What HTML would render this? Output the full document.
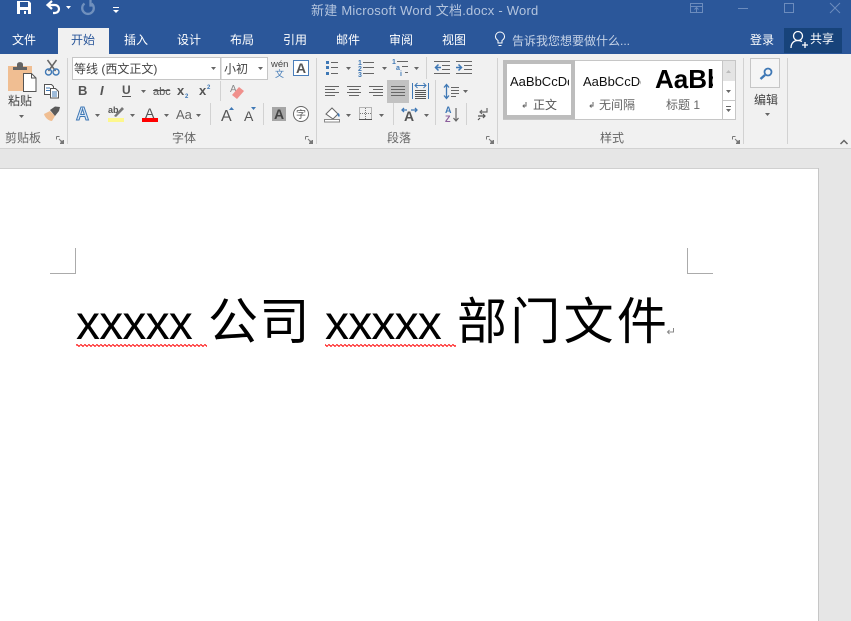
<!DOCTYPE html>
<html lang="zh">
<head>
<meta charset="utf-8">
<title>新建 Microsoft Word 文档.docx - Word</title>
<style>
html,body{margin:0;padding:0;width:851px;height:621px;overflow:hidden;background:#e6e6e6}
svg{display:block;position:absolute;left:0;top:0}
text{font-family:"Liberation Sans","Noto Sans CJK SC",sans-serif}
.t{font-size:12px;fill:#fff}
.g{font-size:12px;fill:#444}
.l{font-size:12px;fill:#666}
</style>
</head>
<body>
<svg width="851" height="621" viewBox="0 0 851 621" xmlns="http://www.w3.org/2000/svg">
<defs>
<polygon id="a" points="0,0 5,0 2.5,3" fill="#666"/>
<g id="lc" fill="none" stroke="#777" stroke-width="1"><path d="M.5 .5h3M.5 .5v3M7.5 4v3.5H4"/><path d="M3 3l3 3" stroke="#777"/><rect x="4.5" y="4.5" width="3" height="3" fill="#777" stroke="none"/></g>
<pattern id="wv" x="0" y="344" width="4" height="3" patternUnits="userSpaceOnUse">
<path d="M-1 1.8L1 .6L3 2.4L5 .6" fill="none" stroke="#f00" stroke-width="1"/>
</pattern>
</defs>

<!-- backgrounds -->
<rect width="851" height="54" fill="#2b579a"/>
<rect y="54" width="851" height="94" fill="#f1f1f1"/>
<rect y="148" width="851" height="1" fill="#d2d2d2"/>
<rect y="149" width="851" height="472" fill="#e6e6e6"/>
<rect x="0" y="168" width="818" height="453" fill="#fff"/>
<rect x="818" y="168" width="1" height="453" fill="#c6c6c6"/>
<rect x="0" y="168" width="818" height="1" fill="#d0d0d0"/>

<!-- QAT -->
<path d="M17 1h12l2 2v11H17z" fill="#fff"/>
<rect x="20" y="2" width="8" height="5" fill="#2b579a"/>
<rect x="20" y="10" width="8" height="4" fill="#2b579a"/>
<rect x="24" y="11" width="2" height="3" fill="#fff"/>
<path d="M48 5h7a4 4 0 0 1 0 8h-2" fill="none" stroke="#fff" stroke-width="2.200"/>
<path d="M52 1l-4.500 4 4.500 4" fill="none" stroke="#fff" stroke-width="2.200"/>
<polygon points="66,6 71,6 68.500,9" fill="#fff"/>
<path d="M84.500 3.500a5.800 5.800 0 1 0 7 0" fill="none" stroke="#7090bd" stroke-width="2.300"/>
<path d="M90.500 0v5.500h3" fill="none" stroke="#7090bd" stroke-width="2.300"/>
<rect x="113" y="7" width="6" height="1" fill="#fff"/>
<polygon points="113,10 119,10 116,13" fill="#fff"/>

<!-- title -->
<text x="311" y="15" style="font-size:13px;fill:#b3c4de;letter-spacing:.24px">新建 Microsoft Word 文档.docx - Word</text>

<!-- window controls -->
<g fill="none" stroke="#6c8cbd" stroke-width="1">
<rect x="690.500" y="3.500" width="12" height="9"/>
<path d="M690 6.500h13M696.500 12V8M694.500 9.500l2-2 2 2"/>
<path d="M738 8.500h10"/>
<rect x="784.500" y="3.500" width="9" height="9"/>
<path d="M830 3l10 10M840 3l-10 10"/>
</g>

<!-- tabs -->
<rect x="58" y="28" width="51" height="26" fill="#f1f1f1"/>
<text class="t" x="12" y="44">文件</text>
<text class="g" x="71" y="44" style="fill:#2b579a">开始</text>
<text class="t" x="124" y="44">插入</text>
<text class="t" x="177" y="44">设计</text>
<text class="t" x="230" y="44">布局</text>
<text class="t" x="283" y="44">引用</text>
<text class="t" x="336" y="44">邮件</text>
<text class="t" x="389" y="44">审阅</text>
<text class="t" x="442" y="44">视图</text>
<path d="M498 43v-2.500c-1.500-1-2.500-2.300-2.500-4a4.500 4.500 0 0 1 9 0c0 1.700-1 3-2.500 4V43zM498.500 45.500h3" fill="none" stroke="#fff" stroke-width="1"/>
<text x="512" y="45" style="font-size:12px;fill:#c6d3e7">告诉我您想要做什么...</text>
<text class="t" x="750" y="44">登录</text>
<rect x="784" y="28" width="58" height="25" fill="#17437a"/>
<circle cx="798" cy="36" r="4.500" fill="none" stroke="#fff" stroke-width="1.300"/>
<path d="M791 48c0-5 3-7.500 7-7.500 2 0 3 .5 4 1M802 45h6M805 42v6" fill="none" stroke="#fff" stroke-width="1.300"/>
<text class="t" x="810" y="43">共享</text>

<!-- separators -->
<g fill="#d2d2d2">
<rect x="67" y="58" width="1" height="86"/>
<rect x="316" y="58" width="1" height="86"/>
<rect x="497" y="58" width="1" height="86"/>
<rect x="743" y="58" width="1" height="86"/>
<rect x="787" y="58" width="1" height="86"/>
<rect x="426" y="57" width="1" height="22"/>
<rect x="220" y="81" width="1" height="20"/>
<rect x="210" y="103" width="1" height="22"/>
<rect x="263" y="103" width="1" height="22"/>
<rect x="435" y="80" width="1" height="45"/>
<rect x="393" y="103" width="1" height="22"/>
<rect x="466" y="103" width="1" height="22"/>
</g>

<!-- clipboard -->
<rect x="8" y="66" width="24" height="25" fill="#f0be92"/>
<path d="M13 70v-3h4v-2.500a2.500 2 0 0 1 6 0V67h4v3z" fill="#636363"/>
<path d="M23.500 73.500h8l4.500 4.500v13.500H23.500z" fill="#fff" stroke="#555"/>
<path d="M31.500 73.500v4.500H36" fill="none" stroke="#555"/>
<text class="g" x="8" y="105">粘贴</text>
<use href="#a" x="19" y="115"/>
<!-- scissors -->
<path d="M47.500 60l8 11M56.500 60l-8 11" stroke="#666" stroke-width="1.500" fill="none"/>
<circle cx="48.500" cy="72" r="3" fill="none" stroke="#3f78b5" stroke-width="1.400"/>
<circle cx="56" cy="72" r="3" fill="none" stroke="#3f78b5" stroke-width="1.400"/>
<!-- copy -->
<path d="M44.500 84.500h7l2 2v8h-9z" fill="#fff" stroke="#555"/>
<path d="M50.500 88.500h5l3 3v6.500h-8z" fill="#fff" stroke="#555"/>
<path d="M46 88h4M46 90.500h4M52 92h5M52 94h5M52 96h5" stroke="#3f78b5" stroke-width="1"/>
<!-- painter -->
<path d="M44 114l6-3 5 5-3 5c-3 0-7-3-8-7z" fill="#f0be92"/>
<path d="M50 110l5-3.500 5 .5-1 4-4 5z" fill="#5a5a5a"/>
<text class="l" x="5" y="142">剪贴板</text>
<use href="#lc" x="56" y="136"/>

<!-- font -->
<rect x="72.500" y="57.500" width="148" height="22" fill="#fff" stroke="#c6c6c6"/>
<rect x="221" y="57.500" width="46.500" height="22" fill="#fff" stroke="#c6c6c6"/>
<text class="g" x="74" y="73" style="font-size:12px">等线 (西文正文)</text>
<use href="#a" x="211" y="67"/>
<text class="g" x="224" y="73">小初</text>
<use href="#a" x="258" y="67"/>
<text x="271" y="67" style="font-size:9.500px;fill:#444">wén</text>
<text x="275" y="77" style="font-size:9px;fill:#3f78b5">文</text>
<rect x="293.500" y="60.500" width="15" height="15" fill="#fff" stroke="#4a7ebb"/>
<text x="296" y="73" style="font-size:14px;font-weight:bold;fill:#555">A</text>

<text x="78" y="95" style="font-size:13px;font-weight:bold;fill:#555">B</text>
<text x="100" y="95" style="font-size:13px;font-weight:bold;font-style:italic;fill:#555">I</text>
<text x="122" y="94" style="font-size:12px;font-weight:bold;fill:#555">U</text>
<rect x="122" y="96" width="9" height="1" fill="#555"/>
<use href="#a" x="141" y="90"/>
<text x="153" y="95" style="font-size:11px;fill:#555">abc</text>
<rect x="153" y="90" width="17" height="1" fill="#555"/>
<text x="177" y="95" style="font-size:13px;font-weight:bold;fill:#555">x</text>
<text x="185" y="98" style="font-size:6px;font-weight:bold;fill:#3f78b5">2</text>
<text x="199" y="95" style="font-size:13px;font-weight:bold;fill:#555">x</text>
<text x="207" y="89" style="font-size:6px;font-weight:bold;fill:#3f78b5">2</text>
<text x="230" y="92" style="font-size:10px;fill:#888">A</text>
<path d="M232 95l7-8 5 4-7 8z" fill="#f0908c"/>

<text x="76" y="120" style="font-size:18px;font-weight:bold;fill:#dbe8f6;stroke:#3f78b5;stroke-width:1">A</text>
<use href="#a" x="95" y="114"/>
<text x="108" y="113" style="font-size:9px;font-weight:bold;fill:#555">ab</text>
<path d="M114 116l8-9 2 2-8 8z" fill="#777"/>
<rect x="108" y="118" width="16" height="4" fill="#fdf78d"/>
<use href="#a" x="130" y="114"/>
<text x="145" y="118" style="font-size:14px;fill:#555">A</text>
<rect x="142" y="118" width="16" height="4" fill="#f00"/>
<use href="#a" x="164" y="114"/>
<text x="176" y="119" style="font-size:13px;fill:#666">Aa</text>
<use href="#a" x="196" y="114"/>
<text x="221" y="121" style="font-size:16px;fill:#555">A</text>
<polygon points="229,110 234,110 231.500,107" fill="#3f78b5"/>
<text x="244" y="121" style="font-size:14px;fill:#555">A</text>
<polygon points="251,107 256,107 253.500,110" fill="#3f78b5"/>
<rect x="272" y="107" width="14" height="14" fill="#a6a6a6"/>
<text x="274" y="119" style="font-size:14px;font-weight:bold;fill:#444">A</text>
<circle cx="301" cy="114" r="7.500" fill="#fff" stroke="#666"/>
<text x="296" y="118" style="font-size:10px;fill:#555">字</text>
<text class="l" x="172" y="142">字体</text>
<use href="#lc" x="305" y="136"/>

<!-- paragraph row 1 -->
<g fill="#3f78b5">
<rect x="326" y="61" width="3" height="3"/><rect x="326" y="66" width="3" height="3"/><rect x="326" y="72" width="3" height="3"/>
</g>
<path d="M331 62.500h7M331 67.500h7M331 73.500h7M363 62.500h11M363 67.500h11M363 73.500h11M397 61.500h11M402 66.500h6M405 72.500h3" stroke="#666" stroke-width="1"/>
<text x="358" y="65" style="font-size:7px;font-weight:bold;fill:#3f78b5">1</text>
<text x="358" y="71" style="font-size:7px;font-weight:bold;fill:#3f78b5">2</text>
<text x="358" y="77" style="font-size:7px;font-weight:bold;fill:#3f78b5">3</text>
<text x="392" y="64" style="font-size:7px;font-weight:bold;fill:#3f78b5">1</text>
<text x="396" y="70" style="font-size:7px;font-weight:bold;fill:#3f78b5">a</text>
<text x="400" y="76" style="font-size:7px;font-weight:bold;fill:#3f78b5">i</text>
<use href="#a" x="346" y="67"/><use href="#a" x="382" y="67"/><use href="#a" x="414" y="67"/>
<path d="M434 61.500h16M442 65.500h8M442 69.500h8M434 73.500h16M456 61.500h16M464 65.500h8M464 69.500h8M456 73.500h16" stroke="#666" stroke-width="1"/>
<path d="M441 67.500h-5M438.500 64.500l-3 3 3 3M456 67.500h5M458.500 64.500l3 3-3 3" stroke="#3f78b5" stroke-width="1.500" fill="none"/>

<!-- paragraph row 2 -->
<rect x="387" y="80" width="22" height="23" fill="#c2c2c2"/>
<path d="M325 86.500h14M325 89.500h10M325 92.500h14M325 95.500h10M347 86.500h14M349 89.500h10M347 92.500h14M349 95.500h10M369 86.500h14M373 89.500h10M369 92.500h14M373 95.500h10M391 86.500h14M391 89.500h14M391 92.500h14M391 95.500h14" stroke="#666" stroke-width="1"/>
<path d="M412.500 83v16M428.500 83v16" stroke="#3f78b5" stroke-width="1"/>
<path d="M415 90.500h11M415 92.500h11M415 94.500h11M415 96.500h11M415 98.500h11" stroke="#555" stroke-width="1"/>
<path d="M415 85.500h11M417.500 83l-2.500 2.500 2.500 2.500M423.500 83l2.500 2.500-2.500 2.500" stroke="#3f78b5" fill="none"/>
<path d="M446.500 85v13M444 87.500l2.500-3 2.500 3M444 95.500l2.500 3 2.500-3" stroke="#3f78b5" stroke-width="1.300" fill="none"/>
<path d="M451 87.500h8M451 90.500h8M451 93.500h8M451 96.500h5" stroke="#666"/>
<use href="#a" x="463" y="90"/>

<!-- paragraph row 3 -->
<path d="M326 114l6-6 6 6-5 5z" fill="#fff" stroke="#666"/>
<path d="M338 113c2 1 2 3 1 4-1-1-2-2-1-4z" fill="#3f78b5"/>
<rect x="324.500" y="119.500" width="15" height="2.500" fill="#fff" stroke="#888"/>
<use href="#a" x="346" y="114"/>
<rect x="359.500" y="107.500" width="12" height="12" fill="none" stroke="#777" stroke-dasharray="1 1"/>
<path d="M365.500 108v12M360 113.500h12" stroke="#777" stroke-dasharray="1 1"/>
<path d="M359 119.500h13" stroke="#555"/>
<use href="#a" x="379" y="114"/>
<text x="404" y="121" style="font-size:14px;font-weight:bold;fill:#555">A</text>
<path d="M402 110h5M404 108l-2 2 2 2M411 110h6M415 108l2 2-2 2" stroke="#3f78b5" stroke-width="1.300" fill="none"/>
<use href="#a" x="424" y="114"/>
<text x="445" y="113" style="font-size:9px;font-weight:bold;fill:#3f78b5">A</text>
<text x="445" y="122" style="font-size:9px;font-weight:bold;fill:#8b5e9b">Z</text>
<path d="M456 108v13M453.500 118l2.500 3 2.500-3" stroke="#666" stroke-width="1.200" fill="none"/>
<path d="M487 108v4h-7M482 110l-2 2 2 2" stroke="#666" stroke-width="1.200" fill="none"/>
<path d="M478 116h7M483 114l2 2-2 2M478 120l2-2" stroke="#555" stroke-width="1.200" fill="none"/>
<text class="l" x="387" y="142">段落</text>
<use href="#lc" x="486" y="136"/>

<!-- styles -->
<rect x="503.500" y="60.500" width="232" height="59" fill="#fff" stroke="#c6c6c6"/>
<rect x="505" y="62" width="68" height="55" fill="#fff" stroke="#bdbdbd" stroke-width="4"/>
<svg x="510" y="70" width="59" height="22"><text x="0" y="16" style="font-size:13px;fill:#111">AaBbCcDd</text></svg>
<path d="M526 102v4h-3M524.500 104.500l-1.500 1.500 1.500 1.500" stroke="#666" fill="none"/>
<text class="g" x="533" y="109" style="fill:#555">正文</text>
<svg x="583" y="70" width="58" height="22"><text x="0" y="16" style="font-size:13px;fill:#111">AaBbCcDd</text></svg>
<path d="M593 102v4h-3M591.500 104.500l-1.500 1.500 1.500 1.500" stroke="#666" fill="none"/>
<text class="l" x="599" y="109">无间隔</text>
<svg x="655" y="62" width="58" height="32"><text x="0" y="26" style="font-size:26px;font-weight:bold;fill:#000">AaBbC</text></svg>
<text class="l" x="666" y="109">标题 1</text>
<rect x="722.500" y="60.500" width="13" height="59" fill="#fff" stroke="#c6c6c6"/>
<rect x="723" y="61" width="12" height="20" fill="#e4e4e4"/>
<path d="M722 100.500h14" stroke="#c6c6c6"/>
<polygon points="726,73 731,73 728.500,70" fill="#bbb"/>
<use href="#a" x="726" y="90"/>
<rect x="726" y="106" width="5" height="1" fill="#666"/>
<use href="#a" x="726" y="109"/>
<text class="l" x="600" y="142">样式</text>
<use href="#lc" x="732" y="136"/>

<!-- editing -->
<rect x="750.500" y="58.500" width="29" height="29" fill="#f5f5f5" stroke="#c6c6c6"/>
<circle cx="768" cy="72" r="3.500" fill="none" stroke="#3f78b5" stroke-width="1.800"/>
<path d="M765 75l-4.500 4" stroke="#3f78b5" stroke-width="2.400"/>
<text class="g" x="754" y="104">编辑</text>
<use href="#a" x="765" y="113"/>
<path d="M840.500 144l3.500-3.500 3.500 3.500" fill="none" stroke="#666" stroke-width="1.500"/>

<!-- document -->
<path d="M50 273.500h25.500V248M687.500 248v25.500H713" fill="none" stroke="#ababab"/>
<text x="76" y="339" style="font-size:48px;fill:#000;letter-spacing:-.8px">xxxxx</text>
<text x="208" y="339" style="font-size:50px;fill:#000;letter-spacing:1.500px">公司</text>
<text x="325" y="339" style="font-size:48px;fill:#000;letter-spacing:-.8px">xxxxx</text>
<text x="457" y="339" style="font-size:50px;fill:#000;letter-spacing:3.300px">部门文件</text>
<path d="M673.500 328v4h-6M669.500 330l-2 2 2 2" fill="none" stroke="#888"/>
<rect x="76" y="344" width="131" height="3" fill="url(#wv)"/>
<rect x="325" y="344" width="131" height="3" fill="url(#wv)"/>
</svg>
</body>
</html>
